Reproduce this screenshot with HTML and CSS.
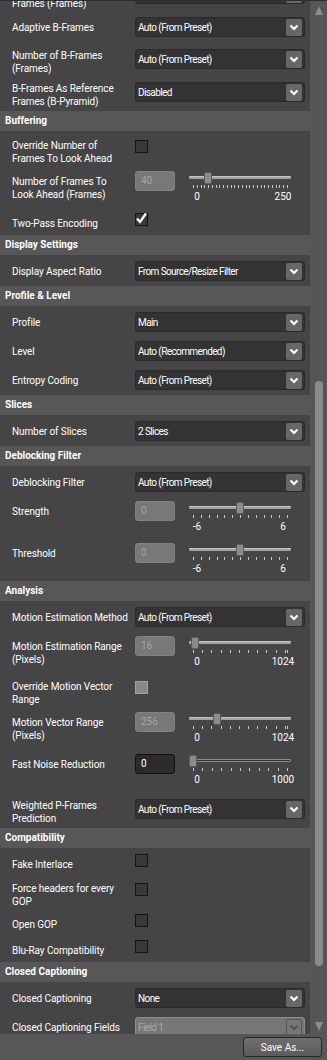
FILE: index.html
```html
<!DOCTYPE html>
<html lang="en">
<head>
    <meta charset="UTF-8">
    <meta name="viewport" content="width=device-width, initial-scale=1.0">
    <title>Encoder Settings</title>
    <link rel="stylesheet" href="styles.css">
</head>
<body>
<div class="window">
    <div class="panel">
        <div class="content">
            <!-- B-Frames (scrolled) -->
            <div class="section first">
                <div class="row tall">
                    <div class="lbl">Number of Reference<br>Frames (Frames)</div>
                    <div class="dd"><span></span><span class="arr"><svg width="10" height="7" viewBox="0 0 10 7"><path d="M1.5 1.5 5 5 8.5 1.5"/></svg></span></div>
                </div>
                <div class="row loose">
                    <div class="lbl">Adaptive B-Frames</div>
                    <div class="dd"><span>Auto (From Preset)</span><span class="arr"><svg width="10" height="7" viewBox="0 0 10 7"><path d="M1.5 1.5 5 5 8.5 1.5"/></svg></span></div>
                </div>
                <div class="row tall">
                    <div class="lbl">Number of B-Frames<br>(Frames)</div>
                    <div class="dd"><span>Auto (From Preset)</span><span class="arr"><svg width="10" height="7" viewBox="0 0 10 7"><path d="M1.5 1.5 5 5 8.5 1.5"/></svg></span></div>
                </div>
                <div class="row tall">
                    <div class="lbl">B-Frames As Reference<br>Frames (B-Pyramid)</div>
                    <div class="dd"><span>Disabled</span><span class="arr"><svg width="10" height="7" viewBox="0 0 10 7"><path d="M1.5 1.5 5 5 8.5 1.5"/></svg></span></div>
                </div>
            </div>

            <!-- Buffering -->
            <div class="group">Buffering</div>
            <div class="section">
                <div class="row tall check">
                    <div class="lbl">Override Number of<br>Frames To Look Ahead</div>
                    <div class="cb"></div>
                </div>
                <div class="row">
                    <div class="lbl">Number of Frames To<br>Look Ahead (Frames)</div>
                    <div class="slide">
                        <div class="num">40</div>
                        <div class="slider">
                            <div class="track"></div>
                            <div class="thumb" style="left: 15px"></div>
                            <div class="ticks" data-range="250" data-step="10"></div>
                            <div class="marks"><span>0</span><span>250</span></div>
                        </div>
                    </div>
                </div>
                <div class="row">
                    <div class="lbl">Two-Pass Encoding</div>
                    <div class="cb"><svg width="13" height="13" viewBox="0 0 13 13"><path d="M2 6.5 5 10 11 1.5"/></svg></div>
                </div>
            </div>

            <!-- Display Settings -->
            <div class="group">Display Settings</div>
            <div class="section">
                <div class="row">
                    <div class="lbl">Display Aspect Ratio</div>
                    <div class="dd"><span>From Source/Resize Filter</span><span class="arr"><svg width="10" height="7" viewBox="0 0 10 7"><path d="M1.5 1.5 5 5 8.5 1.5"/></svg></span></div>
                </div>
            </div>

            <!-- Profile & Level -->
            <div class="group">Profile &amp; Level</div>
            <div class="section">
                <div class="row">
                    <div class="lbl">Profile</div>
                    <div class="dd"><span>Main</span><span class="arr"><svg width="10" height="7" viewBox="0 0 10 7"><path d="M1.5 1.5 5 5 8.5 1.5"/></svg></span></div>
                </div>
                <div class="row">
                    <div class="lbl">Level</div>
                    <div class="dd"><span>Auto (Recommended)</span><span class="arr"><svg width="10" height="7" viewBox="0 0 10 7"><path d="M1.5 1.5 5 5 8.5 1.5"/></svg></span></div>
                </div>
                <div class="row">
                    <div class="lbl">Entropy Coding</div>
                    <div class="dd"><span>Auto (From Preset)</span><span class="arr"><svg width="10" height="7" viewBox="0 0 10 7"><path d="M1.5 1.5 5 5 8.5 1.5"/></svg></span></div>
                </div>
            </div>

            <!-- Slices -->
            <div class="group">Slices</div>
            <div class="section">
                <div class="row">
                    <div class="lbl">Number of Slices</div>
                    <div class="dd"><span>2 Slices</span><span class="arr"><svg width="10" height="7" viewBox="0 0 10 7"><path d="M1.5 1.5 5 5 8.5 1.5"/></svg></span></div>
                </div>
            </div>

            <!-- Deblocking Filter -->
            <div class="group">Deblocking Filter</div>
            <div class="section">
                <div class="row">
                    <div class="lbl">Deblocking Filter</div>
                    <div class="dd"><span>Auto (From Preset)</span><span class="arr"><svg width="10" height="7" viewBox="0 0 10 7"><path d="M1.5 1.5 5 5 8.5 1.5"/></svg></span></div>
                </div>
                <div class="row">
                    <div class="lbl">Strength</div>
                    <div class="slide">
                        <div class="num">0</div>
                        <div class="slider">
                            <div class="track"></div>
                            <div class="thumb" style="left: 47px"></div>
                            <div class="ticks" data-range="12" data-step="1"></div>
                            <div class="marks"><span>-6</span><span>6</span></div>
                        </div>
                    </div>
                </div>
                <div class="row">
                    <div class="lbl">Threshold</div>
                    <div class="slide">
                        <div class="num">0</div>
                        <div class="slider">
                            <div class="track"></div>
                            <div class="thumb" style="left: 47px"></div>
                            <div class="ticks" data-range="12" data-step="1"></div>
                            <div class="marks"><span>-6</span><span>6</span></div>
                        </div>
                    </div>
                </div>
            </div>

            <!-- Analysis -->
            <div class="group">Analysis</div>
            <div class="section">
                <div class="row">
                    <div class="lbl">Motion Estimation Method</div>
                    <div class="dd"><span>Auto (From Preset)</span><span class="arr"><svg width="10" height="7" viewBox="0 0 10 7"><path d="M1.5 1.5 5 5 8.5 1.5"/></svg></span></div>
                </div>
                <div class="row">
                    <div class="lbl">Motion Estimation Range<br>(Pixels)</div>
                    <div class="slide">
                        <div class="num">16</div>
                        <div class="slider">
                            <div class="track"></div>
                            <div class="thumb" style="left: 1.5px"></div>
                            <div class="ticks" data-range="1024" data-step="100"></div>
                            <div class="marks"><span>0</span><span>1024</span></div>
                        </div>
                    </div>
                </div>
                <div class="row tall check">
                    <div class="lbl">Override Motion Vector<br>Range</div>
                    <div class="cb dis"></div>
                </div>
                <div class="row">
                    <div class="lbl">Motion Vector Range<br>(Pixels)</div>
                    <div class="slide">
                        <div class="num">256</div>
                        <div class="slider">
                            <div class="track"></div>
                            <div class="thumb" style="left: 23.5px"></div>
                            <div class="ticks" data-range="1024" data-step="100"></div>
                            <div class="marks"><span>0</span><span>1024</span></div>
                        </div>
                    </div>
                </div>
                <div class="row loose">
                    <div class="lbl">Fast Noise Reduction</div>
                    <div class="slide">
                        <div class="num on">0</div>
                        <div class="slider">
                            <div class="track on"></div>
                            <div class="thumb" style="left: 0px"></div>
                            <div class="ticks" data-range="1000" data-step="100"></div>
                            <div class="marks"><span>0</span><span>1000</span></div>
                        </div>
                    </div>
                </div>
                <div class="row tall">
                    <div class="lbl">Weighted P-Frames<br>Prediction</div>
                    <div class="dd"><span>Auto (From Preset)</span><span class="arr"><svg width="10" height="7" viewBox="0 0 10 7"><path d="M1.5 1.5 5 5 8.5 1.5"/></svg></span></div>
                </div>
            </div>

            <!-- Compatibility -->
            <div class="group">Compatibility</div>
            <div class="section">
                <div class="row">
                    <div class="lbl">Fake Interlace</div>
                    <div class="cb"></div>
                </div>
                <div class="row tall check">
                    <div class="lbl">Force headers for every<br>GOP</div>
                    <div class="cb"></div>
                </div>
                <div class="row">
                    <div class="lbl">Open GOP</div>
                    <div class="cb"></div>
                </div>
                <div class="row">
                    <div class="lbl">Blu-Ray Compatibility</div>
                    <div class="cb"></div>
                </div>
            </div>

            <!-- Closed Captioning -->
            <div class="group">Closed Captioning</div>
            <div class="section">
                <div class="row">
                    <div class="lbl">Closed Captioning</div>
                    <div class="dd"><span>None</span><span class="arr"><svg width="10" height="7" viewBox="0 0 10 7"><path d="M1.5 1.5 5 5 8.5 1.5"/></svg></span></div>
                </div>
                <div class="row">
                    <div class="lbl">Closed Captioning Fields</div>
                    <div class="dd dis"><span>Field 1</span><span class="arr"><svg width="10" height="7" viewBox="0 0 10 7"><path d="M1.5 1.5 5 5 8.5 1.5"/></svg></span></div>
                </div>
            </div>
        </div>

        <!-- Scrollbar -->
        <div class="scroll">
            <div class="up"></div>
            <div class="sb-thumb"></div>
            <div class="down"></div>
        </div>
    </div>

    <!-- Footer -->
    <div class="footer">
        <button>Save As...</button>
    </div>
</div>

<script>
    // tick marks under each slider, 94px between first and last tick
    document.querySelectorAll('.ticks').forEach(function (el) {
        var range = +el.dataset.range;
        var step = +el.dataset.step;
        function addTick(x) {
            var t = document.createElement('span');
            t.style.left = x + 'px';
            el.appendChild(t);
        }
        for (var v = 0; v <= range; v += step) {
            addTick(Math.round(v / range * 94));
        }
        if (range % step) addTick(94);
    });
</script>
</body>
</html>
```

FILE: styles.css
```css
* {
    margin: 0;
    padding: 0;
    box-sizing: border-box;
}
body {
    background-color: #454545;
    color: #fff;
    font-family: Roboto, "Liberation Sans", sans-serif;
    font-size: 10px;
}
.window {
    width: 327px;
    height: 1060px;
    border-top: 1px solid #2e2e2e;
    display: flex;
    flex-direction: column;
    overflow: hidden;
}
.panel {
    height: 1033px;
    display: flex;
    overflow: hidden;
}
.content {
    width: 310px;
    flex: none;
}
.first {
    margin-top: -23px;
}
/* Group headers */
.group {
    height: 20px;
    line-height: 20px;
    padding-left: 5px;
    background: #575757;
    color: #fff;
    font-weight: bold;
}
.section {
    padding-bottom: 2px;
}
/* Rows */
.row {
    display: grid;
    grid-template-columns: 123px 170px;
    align-items: start;
    padding: 6px 0 3px 12px;
}
.row.tall {
    padding-bottom: 1px;
}
.row.tall .lbl {
    margin-top: 0;
}
.row.tall.check {
    padding: 8px 0 0 12px;
}
.row.tall.check .cb {
    margin-top: 1px;
}
.row.loose {
    padding-bottom: 6px;
}
.lbl {
    margin-top: 4px;
    line-height: 13px;
    white-space: nowrap;
    letter-spacing: -0.1px;
}
/* Dropdowns */
.dd {
    height: 20px;
    display: flex;
    align-items: center;
    justify-content: space-between;
    padding-left: 2px;
    background: #333;
    border: 1px solid #2a2a2a;
    border-radius: 3px;
    color: #fff;
    letter-spacing: -0.6px;
    white-space: nowrap;
}
.arr {
    width: 16px;
    height: 17px;
    margin-right: 2px;
    background: #676767;
    border-radius: 2px;
    display: flex;
    align-items: center;
    justify-content: center;
}
.arr svg {
    fill: none;
    stroke: #fff;
    stroke-width: 2.2;
}
.dd.dis {
    background: #777;
    border-color: #8c8c8c;
    color: #a8a8a8;
}
.dd.dis .arr {
    background: #777;
    border: 1px solid #555;
}
.dd.dis .arr svg {
    stroke: #555;
}
/* Checkboxes */
.cb {
    width: 13px;
    height: 13px;
    background: #393939;
    border: 1px solid #141414;
}
.cb svg {
    display: block;
    margin: -2px 0 0 -1px;
    fill: none;
    stroke: #fff;
    stroke-width: 2.3;
}
.cb.dis {
    background: #888;
    border-color: #a3a3a3;
}
/* Number box + slider */
.slide {
    display: flex;
    gap: 14px;
}
.num {
    width: 40px;
    height: 20px;
    line-height: 18px;
    padding-left: 5px;
    background: #787878;
    border: 1px solid #828282;
    border-radius: 3px;
    color: #a4a4a4;
}
.num.on {
    background: #2b2b2b;
    border-color: #111;
    color: #fff;
}
.slider {
    position: relative;
    width: 102px;
    height: 33px;
    padding-top: 5px;
}
.track {
    height: 3px;
    background: #a2a2a2;
    border-top: 1px solid #c4c4c4;
    border-radius: 1px;
}
.track.on {
    background: #303030;
    border: 1px solid #8a8a8a;
}
.thumb {
    position: absolute;
    top: 1px;
    width: 8px;
    height: 12px;
    background: #8b8b8b;
    border: 1px solid #5c5c5c;
    border-radius: 2px;
}
.ticks {
    position: relative;
    height: 3px;
    margin: 6px 4px 0;
}
.ticks span {
    position: absolute;
    top: 0;
    width: 1px;
    height: 3px;
    background: #c9c9c9;
}
.marks {
    display: flex;
    justify-content: space-between;
    margin: 2px -4px 0;
    line-height: 13px;
    color: #fff;
}
.marks span {
    width: 24px;
    text-align: center;
}
/* Scrollbar */
.scroll {
    width: 17px;
    flex: none;
    background: #565656;
    display: flex;
    flex-direction: column;
    align-items: center;
    padding-top: 5px;
}
.up {
    border-left: 4px solid transparent;
    border-right: 4px solid transparent;
    border-bottom: 9px solid #8c8c8c;
}
.sb-thumb {
    margin-top: 366px;
    width: 8px;
    height: 585px;
    border-radius: 4px;
    background: #8a8a8a;
}
.down {
    margin-top: 56px;
    border-left: 4px solid transparent;
    border-right: 4px solid transparent;
    border-top: 9px solid #8c8c8c;
}
/* Footer */
.footer {
    flex: 1;
    background: #575757;
    display: flex;
    justify-content: flex-end;
    padding: 3px 5px 0 0;
}
.footer button {
    width: 79px;
    height: 20px;
    border: 1px solid #262626;
    border-radius: 3px;
    background: linear-gradient(#6e6e6e, #5c5c5c);
    color: #fff;
    font: inherit;
}
```
